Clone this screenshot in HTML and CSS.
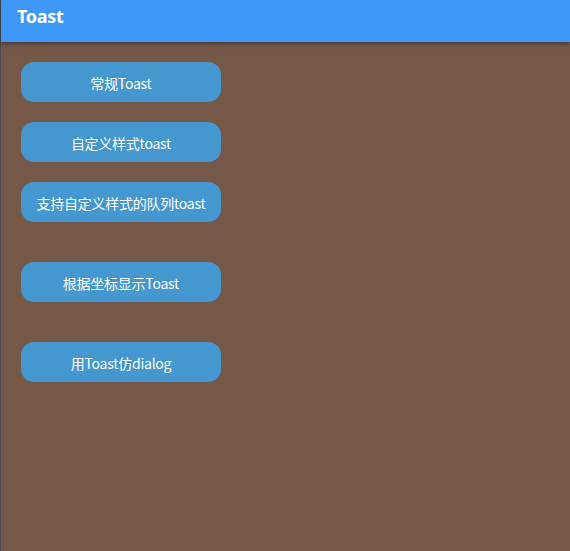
FILE: index.html
```html
<!DOCTYPE html>
<html>
<head>
<meta charset="utf-8">
<link rel="stylesheet" href="styles.css">
</head>
<body>
<div class="app">
  <header class="appbar"><h1 class="title">Toast</h1></header>
  <main class="content">
    <button class="btn">常规Toast</button>
    <button class="btn">自定义样式toast</button>
    <button class="btn">支持自定义样式的队列toast</button>
    <button class="btn btn-gap">根据坐标显示Toast</button>
    <button class="btn btn-gap">用Toast仿dialog</button>
  </main>
</div>
</body>
</html>
```
FILE: styles.css
```css
html, body {
  margin: 0;
  padding: 0;
  height: 100%;
}
body {
  background: #765849;
  font-family: "Noto Sans CJK SC", "Noto Sans", sans-serif;
}
.app {
  height: 100%;
  border-left: 1px solid #4b4b4b;
  box-sizing: border-box;
  display: flex;
  flex-direction: column;
}
.appbar {
  height: 42px;
  background: #3d98f7;
  box-shadow: 0 2px 4px rgba(0, 0, 0, 0.35);
  display: flex;
  align-items: center;
  padding-left: 16px;
  position: relative;
  z-index: 1;
}
.title {
  margin: 0;
  color: #ffffff;
  font-family: "Noto Sans", "Open Sans", sans-serif;
  font-size: 18px;
  font-weight: 700;
  letter-spacing: -0.3px;
  line-height: 1;
  margin-top: -10px;
}
.content {
  display: flex;
  flex-direction: column;
  align-items: flex-start;
  padding: 20px 0 0 20px;
  gap: 20px;
}
.btn {
  width: 200px;
  height: 40px;
  border: none;
  border-radius: 13px;
  background: #4597cf;
  color: #ffffff;
  font-family: "Noto Sans CJK SC", "Noto Sans", sans-serif;
  font-size: 14px;
  padding: 2px 0 0;
  display: flex;
  align-items: center;
  justify-content: center;
  letter-spacing: -0.25px;
}
.btn-gap {
  margin-top: 20px;
}
```
